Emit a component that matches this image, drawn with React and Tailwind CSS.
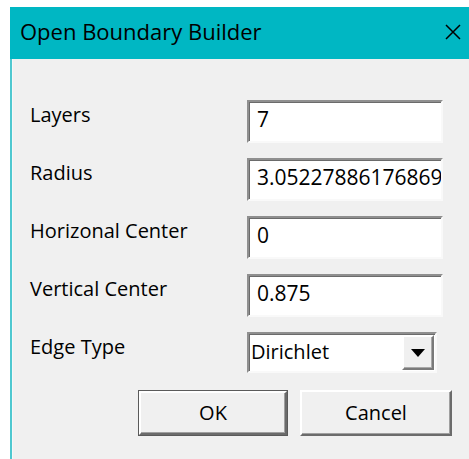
const fields = [
  { label: 'Layers', value: '7' },
  { label: 'Radius', value: '3.052278861768691' },
  { label: 'Horizonal Center', value: '0' },
  { label: 'Vertical Center', value: '0.875' },
];

// classic sunken edit box: dark top/left edge, light bottom/right edge
function EditBox({ value }) {
  return (
    <div className="w-[196px] h-[43px] border-2 border-t-[#8f8f8f] border-l-[#8f8f8f] border-r-[#f9f9f9] border-b-[#f9f9f9] shadow-[inset_1px_1px_0_#6b6b6b] bg-white flex items-center pl-[8px] overflow-hidden whitespace-nowrap">
      <span className="text-[21px] text-black -mt-[3px]">{value}</span>
    </div>
  );
}

function ComboBox({ value }) {
  return (
    <div className="w-[190px] h-[41px] border-2 border-t-[#8f8f8f] border-l-[#8f8f8f] border-r-[#f9f9f9] border-b-[#f9f9f9] shadow-[inset_1px_1px_0_#6b6b6b] bg-white flex items-center">
      <span className="flex-1 text-[20px] text-black pl-[2px] -mt-[2px]">{value}</span>
      <div className="w-[32px] h-[35px] mr-[1px] bg-[#f0f0f0] border-2 border-t-[#ffffff] border-l-[#ffffff] border-r-[#7a7a7a] border-b-[#7a7a7a] shadow-[inset_-1px_-1px_0_#a8a8a8] flex items-center justify-center">
        <svg width="14" height="8" viewBox="0 0 14 8">
          <path d="M0 0 H14 L7 8 Z" fill="#000" />
        </svg>
      </div>
    </div>
  );
}

function PushButton({ children, isDefault, width }) {
  return (
    <div className={`${width} h-[46px] ${isDefault ? 'border border-[#5a5a5a]' : ''}`}>
      <div className="w-full h-full bg-[#f0f0f0] border-2 border-t-[#ffffff] border-l-[#ffffff] border-r-[#6b6b6b] border-b-[#6b6b6b] shadow-[inset_-1px_-1px_0_#a0a0a0] flex items-center justify-center">
        <span className="text-[20px] text-black">{children}</span>
      </div>
    </div>
  );
}

export default function App() {
  return (
    <div className="w-[469px] h-[459px] overflow-hidden bg-white pt-[7px] pl-[10px] font-['Open_Sans',sans-serif]">
      <div className="w-[480px] h-[460px] flex flex-col">
        {/* title bar */}
        <div className="h-[52px] bg-[#00b7c3] flex items-center pl-[10px] pr-[29px]">
          <span className="flex-1 text-[22px] text-black -mt-[4px]">Open Boundary Builder</span>
          <svg width="16" height="16" viewBox="0 0 16 16" className="-mt-[3px]">
            <path d="M1 1 L15 15 M15 1 L1 15" stroke="#000" strokeWidth="1.5" />
          </svg>
        </div>

        {/* client area */}
        <div className="flex-1 flex bg-[#f0f0f0] border-l-2 border-[#4fc8d0]">
          <div className="w-[1px] bg-[#f7f7f7]" />
          <div className="flex-1 pl-[17px] pt-[41px] flex flex-col gap-[15px]">
            {fields.map(f => (
              <div key={f.label} className="flex items-center">
                <span className="w-[217px] text-[20px] text-black -mt-[14px]">{f.label}</span>
                <EditBox value={f.value} />
              </div>
            ))}
            <div className="flex items-center">
              <span className="w-[217px] text-[20px] text-black -mt-[12px]">Edge Type</span>
              <ComboBox value="Dirichlet" />
            </div>
            <div className="flex gap-[12px] pl-[108px] mt-[2px]">
              <PushButton isDefault width="w-[150px]">OK</PushButton>
              <PushButton width="w-[152px]">Cancel</PushButton>
            </div>
          </div>
        </div>
      </div>
    </div>
  );
}
